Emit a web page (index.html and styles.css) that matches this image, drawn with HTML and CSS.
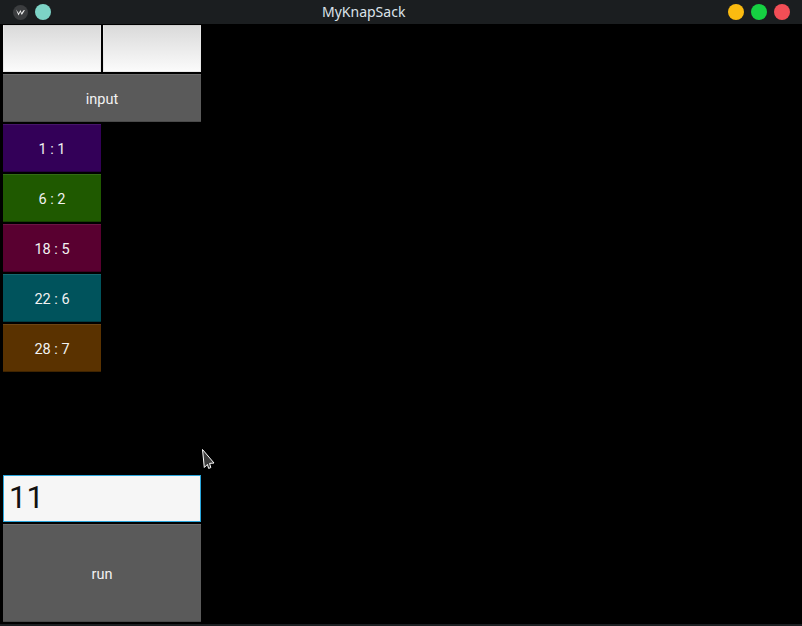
FILE: index.html
```html
<!DOCTYPE html>
<html>
<head>
<meta charset="utf-8">
<link rel="stylesheet" href="styles.css">
</head>
<body>
<div class="window">
  <header class="titlebar">
    <div class="tb-left">
      <span class="app-icon">
        <svg width="15" height="15" viewBox="0 0 15 15"><circle cx="7.5" cy="7.5" r="7.5" fill="#3b3d3f"/><path d="M3 4.5 L5.5 10.5 L7.3 7 L8.8 10 L12 5 L10.2 5.6 L8.7 8 L7.4 5 L5.8 8.2 Z" fill="#f0f0f0"/></svg>
      </span>
      <span class="dot teal"></span>
    </div>
    <div class="title">MyKnapSack</div>
    <div class="tb-right">
      <span class="dot yellow"></span>
      <span class="dot green"></span>
      <span class="dot red"></span>
    </div>
  </header>
  <main class="content">
    <div class="grid">
      <div class="field"></div>
      <div class="field"></div>
      <div class="btn wide">input</div>
      <div class="btn c-purple">1 : 1</div>
      <div class="btn c-green">6 : 2</div>
      <div class="btn c-maroon">18 : 5</div>
      <div class="btn c-teal">22 : 6</div>
      <div class="btn c-brown">28 : 7</div>
      <div class="spacer"></div>
      <div class="textinput">11</div>
      <div class="btn run">run</div>
    </div>
    <svg class="cursor" width="16" height="24" viewBox="0 0 16 24"><path d="M1.5 1.5 L13 15 L8.6 15.4 L9.8 19.6 L7.6 20.4 L6.4 16.4 L3.3 19.5 Z" fill="#3c3c3c" stroke="#ffffff" stroke-width="1" stroke-linejoin="round"/></svg>
  </main>
</div>
</body>
</html>
```
FILE: styles.css
```css
* { box-sizing: border-box; }
html, body { margin: 0; padding: 0; }
body { width: 802px; height: 626px; background: #000; overflow: hidden; font-family: Roboto, "Noto Sans", sans-serif; }
.window { width: 802px; height: 626px; display: flex; flex-direction: column; background: #000; border-bottom: 2px solid #1c1f22; }
.titlebar { height: 24px; background: #1b1e20; position: relative; display: flex; align-items: center; justify-content: space-between; padding: 0 12px 0 13px; flex: none; }
.tb-left, .tb-right { display: flex; align-items: center; }
.tb-left { gap: 7px; }
.tb-right { gap: 7px; }
.app-icon { width: 15px; height: 15px; display: block; }
.app-icon svg { display: block; }
.dot { width: 16px; height: 16px; border-radius: 50%; display: block; }
.teal { background: #7dd3c6; }
.yellow { background: #fbbb10; }
.green { background: #16d142; }
.red { background: #f24e56; }
.title { position: absolute; left: 322px; top: 0; height: 24px; line-height: 23px; font-family: "Noto Sans", "Open Sans", sans-serif; font-size: 14px; color: #dbe3ea; }
.content { flex: 1; position: relative; padding: 0 0 0 3px; }
.grid { display: grid; grid-template-columns: 98px 98px; grid-template-rows: repeat(12, 48px); column-gap: 2px; row-gap: 2px; width: 198px; }
.field { background: linear-gradient(#dadada, #fbfbfb); border: 1px solid #e8e8e8; border-top-color: #cfcfcf; margin-top: 1px; height: 47px; }
.btn { display: flex; align-items: center; justify-content: center; padding-top: 2px; color: #f2f2f2; font-size: 14.5px; background: #5a5a5a; border-top: 1px solid #6c6c6c; border-bottom: 1px solid #4a4a4a; }
.wide { grid-column: 1 / 3; }
.c-purple { grid-column: 1; background: #330058; border-top-color: #46156a; border-bottom-color: #240040; }
.c-green { grid-column: 1; background: #1f5900; border-top-color: #336b15; border-bottom-color: #164000; }
.c-maroon { grid-column: 1; background: #590030; border-top-color: #6b1543; border-bottom-color: #400022; }
.c-teal { grid-column: 1; background: #00535c; border-top-color: #15676f; border-bottom-color: #003c42; }
.c-brown { grid-column: 1; background: #5a3200; border-top-color: #6c4515; border-bottom-color: #402400; }
.spacer { grid-column: 1 / 3; grid-row: 8 / 10; }
.textinput { grid-column: 1 / 3; grid-row: 10; margin-top: 1px; height: 47px; background: #f6f6f6; border: 1px solid #2aa6dc; color: #111; font-size: 31px; line-height: 44px; padding-left: 5px; }
.run { grid-column: 1 / 3; grid-row: 11 / 13; }
.cursor { position: absolute; left: 201px; top: 424px; }
```
